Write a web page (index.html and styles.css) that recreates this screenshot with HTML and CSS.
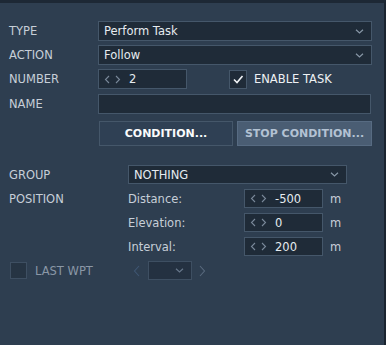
FILE: index.html
```html
<!doctype html>
<html>
<head>
<meta charset="utf-8">
<title>Task</title>
<link rel="stylesheet" href="styles.css">
</head>
<body>
<div class="panel">

<div class="field first">
<span class="label">TYPE</span>
<div class="select wide"><span>Perform Task</span>
<svg class="chev" width="9" height="5" viewBox="0 0 9 5"><path d="M1 0.8 L4.5 4 L8 0.8"/></svg></div>
</div>

<div class="field">
<span class="label">ACTION</span>
<div class="select wide"><span>Follow</span>
<svg class="chev" width="9" height="5" viewBox="0 0 9 5"><path d="M1 0.8 L4.5 4 L8 0.8"/></svg></div>
</div>

<div class="field">
<span class="label">NUMBER</span>
<div class="spin num">
<svg class="arrows" width="22" height="9" viewBox="0 0 22 9"><path d="M10 1 L6.5 4.5 L10 8 M17 1 L20.5 4.5 L17 8"/></svg>
<span>2</span></div>
<div class="check on">
<svg width="16" height="16" viewBox="0 0 16 16"><path d="M4 8.5 L7 11.5 L12.5 5"/></svg></div>
<span class="check-label">ENABLE TASK</span>
</div>

<div class="field name-row">
<span class="label">NAME</span>
<div class="textbox"></div>
</div>

<div class="buttons">
<button class="btn">CONDITION...</button>
<button class="btn stop">STOP CONDITION...</button>
</div>

<div class="group-row">
<span class="label lw">GROUP</span>
<div class="select grp"><span>NOTHING</span>
<svg class="chev" width="9" height="5" viewBox="0 0 9 5"><path d="M1 0.8 L4.5 4 L8 0.8"/></svg></div>
</div>

<div class="pos">
<span class="label">POSITION</span>
<span class="sub">Distance:</span>
<div class="spin small">
<svg class="arrows" width="22" height="9" viewBox="0 0 22 9"><path d="M10 1 L6.5 4.5 L10 8 M17 1 L20.5 4.5 L17 8"/></svg>
<span>-500</span></div>
<span class="unit">m</span>

<span></span>
<span class="sub">Elevation:</span>
<div class="spin small">
<svg class="arrows" width="22" height="9" viewBox="0 0 22 9"><path d="M10 1 L6.5 4.5 L10 8 M17 1 L20.5 4.5 L17 8"/></svg>
<span>0</span></div>
<span class="unit">m</span>

<span></span>
<span class="sub">Interval:</span>
<div class="spin small">
<svg class="arrows" width="22" height="9" viewBox="0 0 22 9"><path d="M10 1 L6.5 4.5 L10 8 M17 1 L20.5 4.5 L17 8"/></svg>
<span>200</span></div>
<span class="unit">m</span>
</div>

<div class="last-row">
<div class="lw last">
<div class="check off"></div>
<span class="dim">LAST WPT</span>
</div>
<svg class="nav prev" width="10" height="12" viewBox="0 0 10 12"><path d="M7 1 L2.5 6 L7 11"/></svg>
<div class="select mini">
<svg class="chev" width="9" height="5" viewBox="0 0 9 5"><path d="M1 0.8 L4.5 4 L8 0.8"/></svg></div>
<svg class="nav next" width="10" height="12" viewBox="0 0 10 12"><path d="M3 1 L7.5 6 L3 11"/></svg>
</div>

</div>
</body>
</html>
```

FILE: styles.css
```css
body{
margin:0;
background:#fff;
font-family:"DejaVu Sans", sans-serif;
font-size:11.5px;
color:#e6ebf0;
}
.panel{
width:384px;
height:342px;
background:#2e3e50;
border-top:3px solid #1d2835;
border-right:2px solid #1a2430;
}
.field{
display:flex;
align-items:center;
height:20px;
margin:4px 0 0 9px;
}
.field.first{
margin-top:18px;
}
.field.name-row{
margin-top:5px;
}
.label{
width:89px;
color:#c7cfd8;
}
.lw{
width:119px;
}
.select,.spin,.textbox{
box-sizing:border-box;
height:20px;
background:#1f2b38;
border:1px solid #45576a;
display:flex;
align-items:center;
}
.select{
padding:0 7px 0 5px;
justify-content:space-between;
}
.chev path{
fill:none;
stroke:#8796a6;
stroke-width:1.2;
}
.wide{
width:274px;
}
.textbox{
width:273px;
}
.spin span{
margin-left:8px;
}
.arrows path,.nav path{
fill:none;
stroke:#7a899a;
stroke-width:1.1;
}
.num{
width:89px;
}
.check{
box-sizing:border-box;
width:18px;
height:19px;
background:#1f2b38;
border:1px solid #45576a;
display:flex;
align-items:center;
justify-content:center;
}
.check.on{
margin-left:42px;
}
.check path{
fill:none;
stroke:#f0f3f6;
stroke-width:1.6;
}
.check-label{
margin-left:7px;
color:#eef1f4;
}
.buttons{
display:flex;
gap:4px;
margin:7px 0 0 99px;
}
.btn{
box-sizing:border-box;
width:134px;
height:25px;
padding:0;
background:#2f4054;
border:1px solid #45576a;
color:#fafbfc;
font-family:"DejaVu Sans", sans-serif;
font-size:11px;
font-weight:bold;
}
.btn.stop{
width:135px;
background:#4a5d73;
border-color:#576b82;
color:#b3c2d3;
}
.group-row{
display:flex;
align-items:center;
height:19px;
margin:19px 0 0 9px;
}
.grp{
width:219px;
height:19px;
}
.pos{
display:grid;
grid-template-columns:119px 116px 79px auto;
grid-auto-rows:19px;
row-gap:5px;
align-items:center;
margin:5px 0 0 9px;
}
.sub{
color:#c7cfd8;
}
.small{
height:19px;
}
.unit{
margin-left:7px;
color:#c7cfd8;
}
.last-row{
display:flex;
align-items:center;
height:19px;
margin:5px 0 0 9px;
}
.last{
display:flex;
align-items:center;
}
.check.off{
width:17px;
height:17px;
margin-left:1px;
background:#263443;
border-color:#3e4f62;
}
.dim{
margin-left:8px;
color:#8a97a6;
}
.nav.prev{
margin-left:4px;
}
.nav.prev path{
stroke:#3f5673;
}
.nav.next{
margin-left:5px;
}
.nav.next path{
stroke:#596a7e;
}
.select.mini{
width:44px;
height:19px;
margin-left:6px;
background:#243141;
border-color:#3e4f62;
justify-content:flex-end;
}
.mini .chev path{
stroke:#66768a;
}
```
